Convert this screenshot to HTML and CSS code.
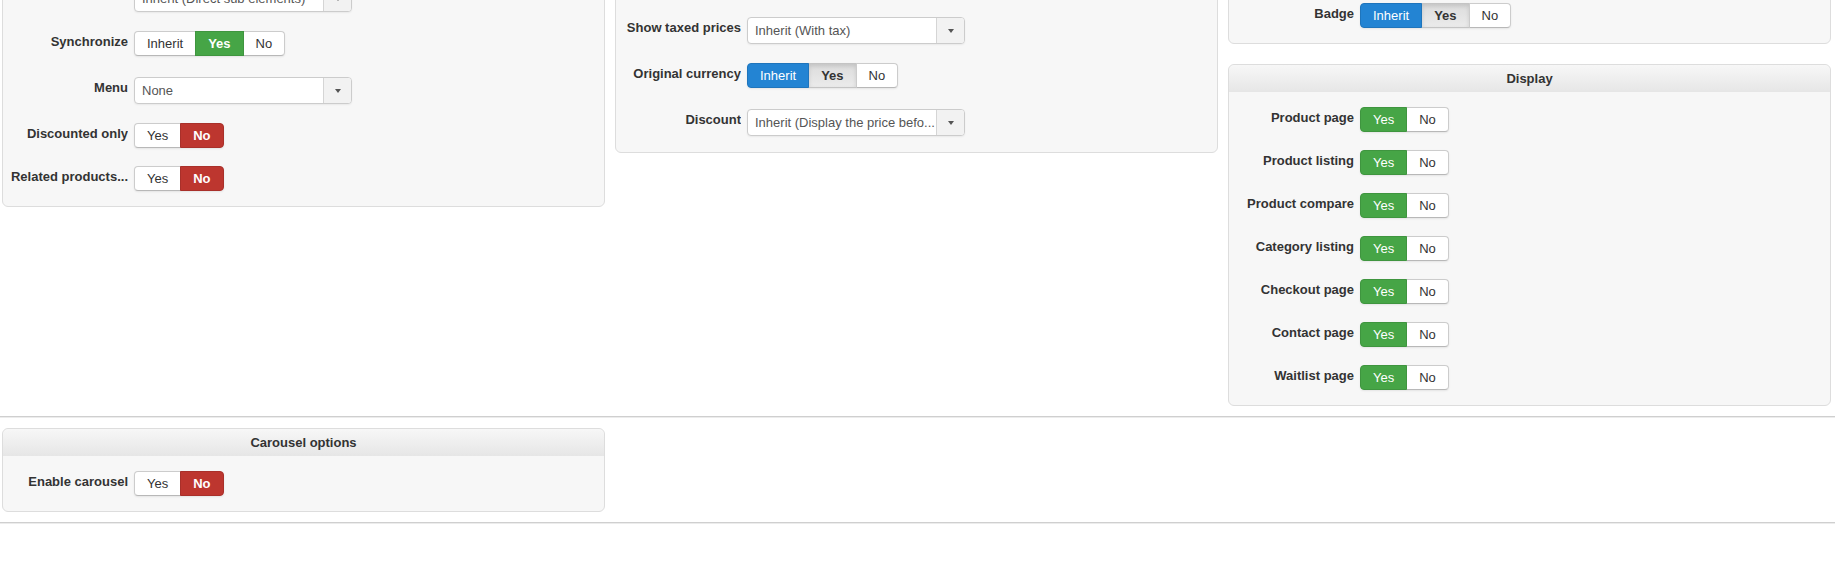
FILE: index.html
```html
<!DOCTYPE html>
<html lang="en">
<head>
<meta charset="utf-8">
<title>Module options</title>
<link rel="stylesheet" href="styles.css">
</head>
<body>
<div class="page">
  <div class="cols top">
    <div class="col">
      <section class="panel pt-left">
        <div class="field h28">
          <span class="lbl"></span>
          <div class="select"><span class="sel-text">Inherit (Direct sub elements)</span><span class="sel-arrow"><b></b></span></div>
        </div>
        <div class="field h28">
          <span class="lbl">Synchronize</span>
          <div class="btns"><span class="btn">Inherit</span><span class="btn green bold">Yes</span><span class="btn">No</span></div>
        </div>
        <div class="field h28">
          <span class="lbl">Menu</span>
          <div class="select"><span class="sel-text">None</span><span class="sel-arrow"><b></b></span></div>
        </div>
        <div class="field">
          <span class="lbl">Discounted only</span>
          <div class="btns"><span class="btn">Yes</span><span class="btn red bold">No</span></div>
        </div>
        <div class="field">
          <span class="lbl">Related products...</span>
          <div class="btns"><span class="btn">Yes</span><span class="btn red bold">No</span></div>
        </div>
      </section>
    </div>
    <div class="col">
      <section class="panel pt-mid">
        <div class="field h28">
          <span class="lbl">Show taxed prices</span>
          <div class="select"><span class="sel-text">Inherit (With tax)</span><span class="sel-arrow"><b></b></span></div>
        </div>
        <div class="field h28">
          <span class="lbl">Original currency</span>
          <div class="btns"><span class="btn blue">Inherit</span><span class="btn gray bold">Yes</span><span class="btn">No</span></div>
        </div>
        <div class="field h28">
          <span class="lbl">Discount</span>
          <div class="select"><span class="sel-text">Inherit (Display the price befo...</span><span class="sel-arrow"><b></b></span></div>
        </div>
      </section>
    </div>
    <div class="col">
      <section class="panel pt-right">
        <div class="field">
          <span class="lbl">Badge</span>
          <div class="btns"><span class="btn blue">Inherit</span><span class="btn gray bold">Yes</span><span class="btn">No</span></div>
        </div>
      </section>
      <section class="panel with-head spaced">
        <header class="panel-head">Display</header>
        <div class="panel-body">
          <div class="field"><span class="lbl">Product page</span><div class="btns"><span class="btn green">Yes</span><span class="btn">No</span></div></div>
          <div class="field"><span class="lbl">Product listing</span><div class="btns"><span class="btn green">Yes</span><span class="btn">No</span></div></div>
          <div class="field"><span class="lbl">Product compare</span><div class="btns"><span class="btn green">Yes</span><span class="btn">No</span></div></div>
          <div class="field"><span class="lbl">Category listing</span><div class="btns"><span class="btn green">Yes</span><span class="btn">No</span></div></div>
          <div class="field"><span class="lbl">Checkout page</span><div class="btns"><span class="btn green">Yes</span><span class="btn">No</span></div></div>
          <div class="field"><span class="lbl">Contact page</span><div class="btns"><span class="btn green">Yes</span><span class="btn">No</span></div></div>
          <div class="field"><span class="lbl">Waitlist page</span><div class="btns"><span class="btn green">Yes</span><span class="btn">No</span></div></div>
        </div>
      </section>
    </div>
  </div>

  <hr class="sep">

  <div class="cols">
    <div class="col">
      <section class="panel with-head">
        <header class="panel-head">Carousel options</header>
        <div class="panel-body">
          <div class="field"><span class="lbl">Enable carousel</span><div class="btns"><span class="btn">Yes</span><span class="btn red bold">No</span></div></div>
        </div>
      </section>
    </div>
    <div class="col"></div>
    <div class="col"></div>
  </div>

  <hr class="sep">
</div>
</body>
</html>
```
FILE: styles.css
```css
html, body {
  margin: 0;
  padding: 0;
  background: #fff;
}

body {
  font-family: "Liberation Sans", Arial, Helvetica, sans-serif;
  font-size: 13px;
  line-height: 18px;
  color: #333;
  overflow: hidden;
}

.page {
  width: 1835px;
}

.cols {
  display: flex;
  align-items: flex-start;
  gap: 10px;
  padding: 0 4px 0 2px;
}

.cols.top {
  margin-top: -40px;
}

.col {
  flex: 1 1 0;
  min-width: 0;
}

.panel {
  background: #f7f7f7;
  border: 1px solid #dddddd;
  border-radius: 6px;
  padding: 0 0 15px 0;
}

.pt-left { padding-top: 24px; }
.pt-mid { padding-top: 56px; }
.pt-right { padding-top: 42px; }

.panel.spaced { margin-top: 20px; }

.panel-head {
  height: 27px;
  line-height: 27px;
  text-align: center;
  font-weight: bold;
  color: #333;
  background: linear-gradient(#f7f7f7, #e6e6e6);
  border-radius: 6px 6px 0 0;
}

.panel-body {
  padding-top: 15px;
}

.field {
  display: flex;
  align-items: flex-start;
  min-height: 25px;
  margin-bottom: 18px;
}

.field:last-child {
  margin-bottom: 0;
}

.field.h28 {
  min-height: 28px;
}

.lbl {
  flex: 0 0 121px;
  width: 121px;
  margin-left: 4px;
  margin-right: 6px;
  padding-top: 2px;
  text-align: right;
  font-weight: bold;
  color: #333;
  white-space: nowrap;
  overflow: hidden;
}

/* button groups */
.btns {
  display: flex;
  border-radius: 4px;
  box-shadow: 0 1px 2px rgba(0, 0, 0, 0.08);
}

.btn {
  display: block;
  padding: 3px 12px;
  line-height: 17px;
  border: 1px solid #cccccc;
  border-bottom-color: #b8b8b8;
  background: #fff;
  color: #333;
}

.btn + .btn {
  margin-left: -1px;
}

.btn:first-child {
  border-radius: 4px 0 0 4px;
}

.btn:last-child {
  border-radius: 0 4px 4px 0;
}

.btn.bold {
  font-weight: bold;
}

.btn.green {
  background: #46a546;
  border-color: #3f953f;
  color: #fff;
  position: relative;
}

.btn.red {
  background: #bd362f;
  border-color: #a9302a;
  color: #fff;
  position: relative;
}

.btn.blue {
  background: #2384d3;
  border-color: #1f75bc;
  color: #fff;
  position: relative;
}

.btn.gray {
  background: linear-gradient(#dcdcdc, #ebebeb);
  border-color: #c4c4c4;
  box-shadow: inset 0 2px 4px rgba(0, 0, 0, 0.12);
  color: #333;
}

/* chosen-like select */
.select {
  display: flex;
  box-sizing: border-box;
  width: 218px;
  height: 27px;
  border: 1px solid #cccccc;
  border-radius: 4px;
  background: #fff;
  box-shadow: 0 1px 2px rgba(0, 0, 0, 0.06);
}

.sel-text {
  flex: 1 1 auto;
  min-width: 0;
  padding: 0 0 0 7px;
  line-height: 25px;
  color: #555;
  white-space: nowrap;
  overflow: hidden;
}

.sel-arrow {
  flex: 0 0 27px;
  display: flex;
  align-items: center;
  justify-content: center;
  border-left: 1px solid #d5d5d5;
  background: #f2f2f2;
  border-radius: 0 3px 3px 0;
}

.sel-arrow b {
  width: 0;
  height: 0;
  border-left: 3px solid transparent;
  border-right: 3px solid transparent;
  border-top: 4px solid #555;
}

/* separators */
.sep {
  height: 0;
  margin: 10px 0;
  border: 0;
  border-top: 1px solid #cfcfcf;
  border-bottom: 1px solid #ececec;
}
```
